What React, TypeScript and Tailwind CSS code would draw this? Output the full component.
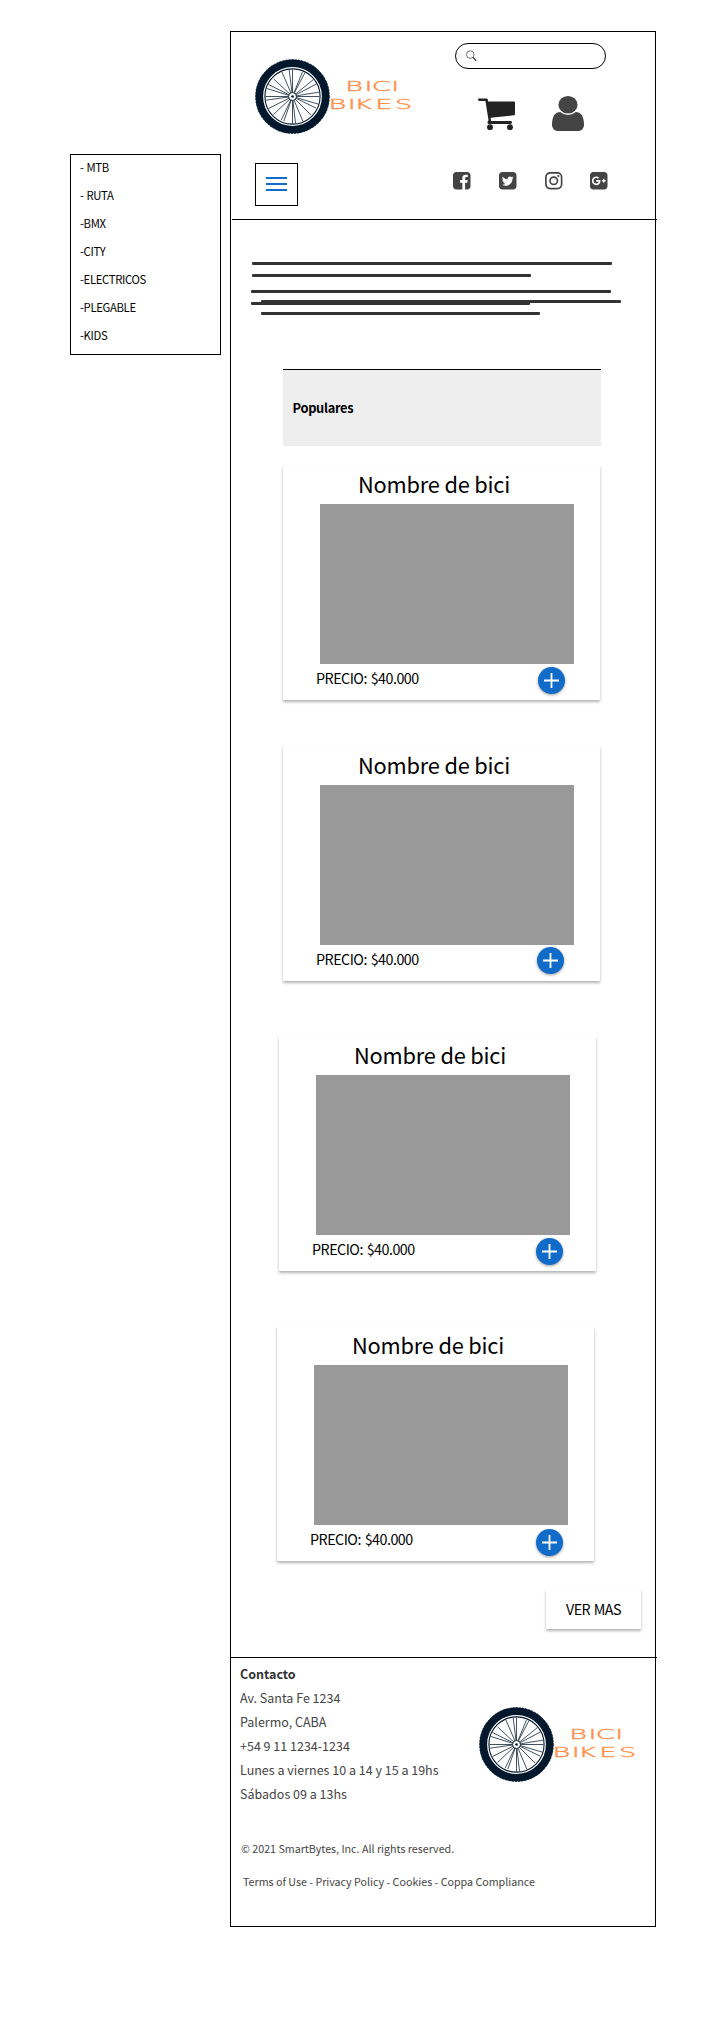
import React from 'react';

const SPOKES = [
  [0, -81], [-10, -80], [30, -74], [37, -71], [63, -51], [71, -37], [79, -13], [81, 0],
  [78, 23], [71, 35], [56, 56], [32, 76], [9, 80], [0, 82], [-26, 74], [-34, 71],
  [-57, 54], [-72, 36], [-79, 11], [-81, 0], [-77, -24], [-72, -36], [-57, -53], [-32, -74],
];

function Logo() {
  return (
    <svg width="158" height="76" viewBox="0 0 158 76" className="block shrink-0" aria-label="Bici Bikes">
      <circle cx="37.5" cy="37.5" r="33.2" fill="none" stroke="#03182d" strokeWidth="7.6" />
      <circle cx="37.5" cy="37.5" r="36.9" fill="none" stroke="#03182d" strokeWidth="0.8" strokeDasharray="2 1.2" />
      <circle cx="37.5" cy="37.5" r="27.6" fill="none" stroke="#03182d" strokeWidth="1.1" />
      {SPOKES.map(([x, y], i) => (
        <line key={i} x1={37.5 + x * 0.05} y1={37.5 + y * 0.05} x2={37.5 + x / 3} y2={37.5 + y / 3} stroke="#03182d" strokeWidth="0.75" />
      ))}
      <circle cx="37.5" cy="37.5" r="4" fill="#fff" stroke="#03182d" strokeWidth="1" />
      <circle cx="37.5" cy="37.5" r="1.3" fill="#03182d" />
      <g fill="#ff914d" stroke="#ff914d" strokeWidth="0.4" fontFamily="'DejaVu Sans', sans-serif" fontSize="14.7" fontWeight="200" transform="scale(1.85 1)">
        <text x="48.8 59.2 63.1 73.7" y="31.9">BICI</text>
        <text x="39.8 50.2 53.7 65 75.7" y="50.1">BIKES</text>
      </g>
    </svg>
  );
}

function Glyph({ d }: { d: string }) {
  return (
    <svg viewBox="128 128 1536 1536" fill="#444" className="block h-[17.5px] w-[17.5px] overflow-visible">
      <path d={d} />
    </svg>
  );
}

const SQUARE = 'M1664 416v960q0 119-84.5 203.5t-203.5 84.5h-960q-119 0-203.5-84.5t-84.5-203.5v-960q0-119 84.5-203.5t203.5-84.5h960q119 0 203.5 84.5t84.5 203.5z';
const FACEBOOK = 'M1376 128q119 0 203.5 84.5t84.5 203.5v960q0 119-84.5 203.5t-203.5 84.5h-188v-595h199l30-232h-229v-148q0-56 23.5-84t91.5-28l122-1v-207q-63-9-178-9-136 0-217.5 80t-81.5 226v171h-200v232h200v595h-532q-119 0-203.5-84.5t-84.5-203.5v-960q0-119 84.5-203.5t203.5-84.5h960z';
const TWITTER = 'M1408 610q-56 25-121 34 68-40 93-117-65 38-134 51-61-66-153-66-87 0-148.5 61.5t-61.5 148.5q0 29 5 48-129-7-242-65t-192-155q-29 50-29 106 0 114 91 175-47-1-100-26v2q0 75 50 133.5t123 72.5q-29 8-51 8-13 0-39-4 21 63 74.5 104t121.5 42q-116 90-261 90-26 0-50-3 148 94 322 94 112 0 210-35.5t168-95 120.5-137 75-162 24.5-168.5q0-18-1-27 63-45 105-109z' + SQUARE;
const GOOGLE = 'M1045 905q0-26-6-64h-362v132h217q-3 24-16.5 50t-37.5 53-66.5 44.5-96.5 17.5q-99 0-169-71t-70-171 70-171 169-71q92 0 153 59l104-101q-108-100-257-100-160 0-272 112.5t-112 271.5 112 271.5 272 112.5q165 0 266.5-105t101.5-270zm345 46h109v-110h-109v-110h-110v110h-110v110h110v110h110v-110z' + SQUARE;

function Social() {
  return (
    <div className="mt-[9px] ml-[154.6px] flex">
      <Glyph d={FACEBOOK} />
      <div className="ml-[28.7px]"><Glyph d={TWITTER} /></div>
      <svg viewBox="0 0 18 18" fill="none" stroke="#444" strokeWidth="1.7" className="ml-[28.5px] block h-[17.5px] w-[17.5px] overflow-visible">
        <rect x="0.9" y="0.9" width="16.2" height="16.2" rx="4.4" />
        <circle cx="9" cy="9" r="3.8" />
        <circle cx="13.8" cy="4.2" r="1.1" fill="#444" stroke="none" />
      </svg>
      <div className="ml-[27.4px]"><Glyph d={GOOGLE} /></div>
    </div>
  );
}

function Header() {
  return (
    <header className="ml-px -mr-[2px] h-[188px] border-b border-black">
      <div className="flex h-[131px]">
        <div className="pt-[27px] pl-[23px]"><Logo /></div>
        <div className="ml-[42px] w-[152px] pt-[11px]">
          <div className="flex h-[26px] w-[151px] items-center rounded-full border border-black pl-[10px]">
            <svg width="11" height="12" viewBox="0 0 11 12" fill="none" stroke="#333" className="block">
              <circle cx="4.3" cy="4.6" r="3.8" strokeWidth="0.7" />
              <path d="M7 7.4L10.2 10.9" strokeWidth="1.3" />
            </svg>
          </div>
          <div className="mt-[27px] ml-[23px] flex">
            <svg width="38" height="35" viewBox="0 0 38 35" fill="#222" className="block">
              <path d="M1.2 2.4h7.4q1 0 1.2 1l.4 2H36q1 0 1 1v11.8q0 1-1 1.1l-23.4 2.4.5 3.4H33q.9 0 .9 1.3T33 28H11q-1.7 0-1.5-1.7l1-2.2L7.4 4.9H1.2Q0 4.9 0 3.6t1.2-1.2z" />
              <circle cx="12" cy="31.2" r="2.9" />
              <circle cx="32" cy="31.2" r="2.9" />
            </svg>
            <svg viewBox="256 128 1280 1536" preserveAspectRatio="none" fill="#444" className="ml-[36px] block h-[35px] w-8">
              <path d="M1536 1399q0 109-62.5 187t-150.5 78h-854q-88 0-150.5-78t-62.5-187q0-85 8.5-160.5t31.5-152 58.5-131 94-89 134.5-34.5q131 128 313 128t313-128q76 0 134.5 34.5t94 89 58.5 131 31.5 152 8.5 160.5zm-256-887q0 159-112.5 271.5t-271.5 112.5-271.5-112.5-112.5-271.5 112.5-271.5 271.5-112.5 271.5 112.5 112.5 271.5z" />
            </svg>
          </div>
        </div>
      </div>
      <div className="flex pl-[23px]">
        <button className="flex h-[43px] w-[43px] flex-col items-center border border-black pt-[13px]" aria-label="Menu">
          <svg width="21" height="15" viewBox="0 0 21 15" fill="#106cc8" className="block">
            <rect y="0" width="21" height="2" />
            <rect y="6" width="21" height="2" />
            <rect y="12" width="21" height="2" />
          </svg>
        </button>
        <Social />
      </div>
    </header>
  );
}

function TextLines({ className }: { className: string }) {
  return (
    <div className={className}>
      <div className="h-[3px] w-[360px] rounded-[1px] bg-[#333]" />
      <div className="mt-[9px] h-[3px] w-[279px] rounded-[1px] bg-[#333]" />
    </div>
  );
}

function Card({ className, plus }: { className: string; plus: string }) {
  return (
    <article className={`h-[235px] w-[317px] rounded-[1px] bg-white shadow-[0_2px_3px_rgba(0,0,0,0.3)] ${className}`}>
      <h3 className="h-[39px] pl-[75px] text-[21.8px] leading-[37px] tracking-[-0.2px] whitespace-nowrap">Nombre de bici</h3>
      <div className="ml-[37px] h-[160px] w-[254px] bg-[#999]" />
      <div className="flex">
        <p className="w-[219px] pl-[33px] text-[14.3px] leading-[27px] tracking-[-0.5px] [word-spacing:1px] whitespace-nowrap">PRECIO: $40.000</p>
        <button aria-label="Agregar" className={`flex h-[27px] w-[27px] items-center justify-center rounded-full bg-[#106cc8] shadow-[0_1px_3px_rgba(0,0,0,0.4)] ${plus}`}>
          <svg width="15" height="15" viewBox="0 0 15 15" stroke="#fff" strokeWidth="1.8" className="block">
            <path d="M7.5 0V15M0 7.5H15" />
          </svg>
        </button>
      </div>
    </article>
  );
}

const MENU = ['- MTB', '- RUTA', '-BMX', '-CITY', '-ELECTRICOS', '-PLEGABLE', '-KIDS'];

export default function App() {
  return (
    <div className="flex h-[2036px] w-[708px] items-start bg-white font-['Noto_Sans_CJK_SC',sans-serif] text-black">
      <nav className="mt-[154px] ml-[70px] h-[201px] w-[151px] shrink-0 border border-black pl-[9px] text-[11.3px] tracking-[-0.33px] [word-spacing:0.6px]">
        <div className="h-[26px] leading-[24px]">{MENU[0]}</div>
        {MENU.slice(1).map((m) => <div key={m} className="leading-7">{m}</div>)}
      </nav>
      <div className="mt-[31px] ml-[9px] h-[1896px] w-[426px] shrink-0 border border-black">
        <Header />
        <main className="h-[1437px]">
          <TextLines className="ml-[21px] pt-[42px]" />
          <TextLines className="mt-[13px] ml-5" />
          <TextLines className="-mt-[5px] ml-[30px]" />
          <h2 className="mt-[54px] ml-[51.5px] h-[77px] w-[318px] border-t border-black bg-[#eee] pl-[10px] text-[12.8px] leading-[75px] font-bold tracking-[-0.3px]">Populares</h2>
          <Card className="mt-[19px] ml-[52px]" plus="mt-[3px] ml-[36px]" />
          <Card className="mt-[46px] ml-[52px]" plus="mt-[2px] ml-[35px]" />
          <Card className="mt-[55px] ml-[48px]" plus="mt-[3px] ml-[38px]" />
          <Card className="mt-[55px] ml-[46px]" plus="mt-[4px] ml-[40px]" />
          <button className="mt-7 ml-[315px] flex h-10 w-[95px] items-center justify-center rounded-[1px] bg-white text-[14.3px] tracking-[-0.55px] [word-spacing:1px] shadow-[0_2px_3px_rgba(0,0,0,0.3)]">VER MAS</button>
        </main>
        <footer className="-mr-[2px] border-t border-black text-[#444]">
          <div className="flex">
            <div className="w-[248px] pt-[4px] pl-[9px] text-[12.5px] leading-6 whitespace-nowrap">
              <div className="font-bold text-[#333]">Contacto</div>
              <div>Av. Santa Fe 1234</div>
              <div>Palermo, CABA</div>
              <div>+54 9 11 1234-1234</div>
              <div>Lunes a viernes 10 a 14 y 15 a 19hs</div>
              <div>Sábados 09 a 13hs</div>
            </div>
            <div className="pt-[49px]"><Logo /></div>
          </div>
          <div className="mt-[31px] pl-[10px] text-[10.7px] leading-6">© 2021 SmartBytes, Inc. All rights reserved.</div>
          <div className="mt-[9px] pl-3 text-[10.7px] leading-6">Terms of Use - Privacy Policy - Cookies - Coppa Compliance</div>
        </footer>
      </div>
    </div>
  );
}
